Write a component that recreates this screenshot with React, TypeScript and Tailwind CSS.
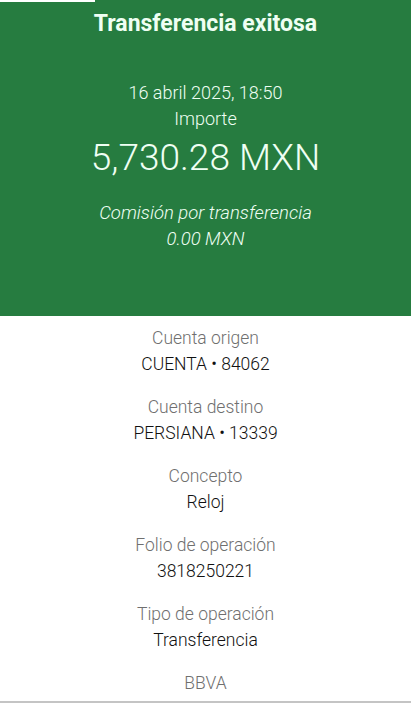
export default function App() {
  const rows = [
    { label: 'Cuenta origen', value: 'CUENTA • 84062' },
    { label: 'Cuenta destino', value: 'PERSIANA • 13339' },
    { label: 'Concepto', value: 'Reloj' },
    { label: 'Folio de operación', value: '3818250221' },
    { label: 'Tipo de operación', value: 'Transferencia' },
  ];

  return (
    <div className="w-[411px] h-[703px] bg-white flex flex-col font-['Roboto',sans-serif] overflow-hidden">
      {/* encabezado verde */}
      <div className="relative h-[316px] bg-[#267c40] flex flex-col items-center text-[#effff3] pt-[10px] shrink-0">
        <div className="absolute top-0 left-0 w-[95px] h-[2px] bg-white" />
        <h1 className="text-[23px] leading-[28px] font-bold">Transferencia exitosa</h1>
        <p className="mt-[42px] text-[18px] leading-[26px] font-light">16 abril 2025, 18:50</p>
        <p className="text-[18px] leading-[26px] font-light">Importe</p>
        <p className="mt-[6px] text-[37px] leading-[40px] font-light">5,730.28 MXN</p>
        <p className="mt-[22px] text-[18.5px] leading-[26px] font-light italic">Comisión por transferencia</p>
        <p className="text-[18.5px] leading-[26px] font-light italic">0.00 MXN</p>
      </div>

      {/* detalle */}
      <div className="flex flex-col items-center pt-[9px] gap-[17px]">
        {rows.map((r) => (
          <div key={r.label} className="flex flex-col items-center">
            <span className="text-[17.5px] leading-[26px] font-light text-[#6f6f6f]">{r.label}</span>
            <span className="text-[17.5px] leading-[26px] font-light text-[#111]">{r.value}</span>
          </div>
        ))}
        <span className="text-[17.5px] leading-[26px] font-light text-[#6f6f6f]">BBVA</span>
      </div>
      <div className="mt-auto h-[2px] bg-[#c4c4c4]" />
    </div>
  );
}
